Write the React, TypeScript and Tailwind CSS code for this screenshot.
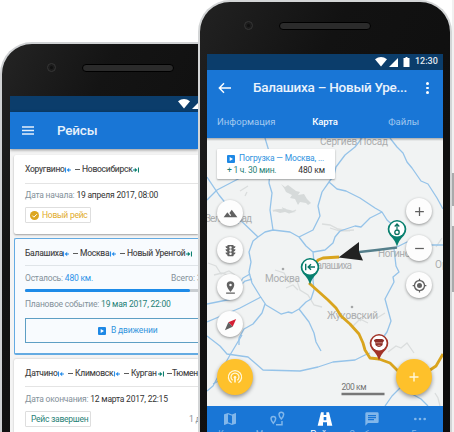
import type { ReactNode } from "react";

const ROBOTO = "font-['Roboto','Noto_Sans',sans-serif]";

function Stop({ end = false }: { end?: boolean }) {
  return (
    <svg viewBox="0 0 6 6" className={`mt-[1px] h-[6px] w-[6px] shrink-0 ${end ? "text-[#0d8070]" : "text-[#2a8fea]"}`}>
      <g transform={end ? "translate(6 0) scale(-1 1)" : undefined}>
        <path d="M.5 .4v5.200M6 3H3" stroke="currentColor" strokeWidth="1.100" fill="none" />
        <path d="M1.600 3 4.200.7v4.600z" fill="currentColor" />
      </g>
    </svg>
  );
}

function PlayBox({ className }: { className: string }) {
  return (
    <svg viewBox="0 0 8 8" className={`shrink-0 ${className}`}>
      <rect width="8" height="8" rx="1" fill="#1e88e5" />
      <path d="M2.700 2v4L6 4z" fill="#fff" />
    </svg>
  );
}

function Wifi() {
  return (
    <svg viewBox="0 0 12 10" className="h-[10px] w-[12px] shrink-0">
      <path d="M0 2.200Q6-2 12 2.200L6 9.600z" fill="#fff" />
    </svg>
  );
}

function Signal() {
  return (
    <svg viewBox="0 0 9 9" className="h-[9px] w-[9px] shrink-0">
      <path d="M9 0v9H0z" fill="#fff" />
    </svg>
  );
}

function Hardware({ className }: { className: string }) {
  return (
    <div className={`flex items-center ${className}`}>
      <div className="h-[9px] w-[9px] rounded-full border border-[#363636] bg-[#1c1c1c] p-[2px]">
        <div className="h-full w-full rounded-full bg-[#101010]" />
      </div>
      <div className="ml-[26px] h-[8px] w-[92px] rounded-full border-[1.5px] border-black bg-[#2b2b2b]" />
    </div>
  );
}

function Title({ children }: { children: ReactNode }) {
  return (
    <div className="flex h-[12px] items-center whitespace-nowrap text-[8.5px] leading-[12px] tracking-[-.25px] text-[#3c3c3c] [-webkit-text-stroke:0.1px_#3c3c3c]">
      {children}
    </div>
  );
}

function Dash() {
  return (
    <span className="flex w-[11px] shrink-0 pl-[4px]">
      <span className="h-px w-[5px] bg-[#5c5c5c]" />
    </span>
  );
}

function LeftPhone() {
  return (
    <div className="w-[198px] shrink-0 overflow-hidden pt-[42px]">
      <div className="h-[390px] rounded-tl-[32px] border-l-2 border-t-2 border-[#d0d2d4] bg-gradient-to-br from-[#242424] via-[#141414] via-30% to-[#0c0c0c] pl-[8px]">
        <Hardware className="h-[52px] pl-[37px] pb-[5px]" />
        <div className="h-[336px] overflow-hidden bg-[#f4f4f4]">
          <div className="flex h-[16px] items-center gap-[2px] bg-[#0b3d6b] pl-[168px]">
            <Wifi />
            <Signal />
          </div>
          <div className="flex h-[37px] items-center bg-[#1976d6] pl-[12px] shadow-[0_1px_3px_rgba(0,0,0,.4)]">
            <svg viewBox="0 0 12 9" className="h-[9px] w-[12px]">
              <path d="M0 1h12M0 4.500h12M0 8h12" stroke="#e6f0fb" strokeWidth="1.300" />
            </svg>
            <div className="ml-[23px] text-[13.500px] font-medium leading-none tracking-[-.2px] text-[#e6f0fb]">Рейсы</div>
          </div>

          <div className="flex flex-col gap-[4px] pl-[4px] pt-[6px]">
            <div className="h-[79px] shrink-0 rounded-l-[2px] bg-white pl-[11px] pt-[8px] shadow-[0_1px_2px_rgba(0,0,0,.35)]">
              <Title>
                <span className="w-[40px] shrink-0">Хоругвино</span><Stop />
                <Dash />
                <span className="w-[51px] shrink-0">Новосибирск</span><Stop end />
              </Title>
              <div className="mt-[8px] h-px bg-[#e4e4e4]" />
              <div className="mt-[5px] flex h-[12px] items-center gap-[2px] whitespace-nowrap text-[8.500px] tracking-[-.22px] text-[#84919a]">
                Дата начала:<span className="text-[#333]">19 апреля 2017, 08:00</span>
              </div>
              <div className="mt-[6px] flex h-[16px] w-[66px] items-center whitespace-nowrap rounded-[1px] border border-[#dedede] pl-[4px] text-[8.500px] tracking-[-.25px] text-[#dfab2c]">
                <svg viewBox="0 0 9 9" className="mr-[3px] h-[9px] w-[9px] shrink-0">
                  <circle cx="4.500" cy="4.500" r="4.500" fill="#dca61f" />
                  <path d="m2.300 4.600 1.600 1.600 3-3" stroke="#fff" fill="none" />
                </svg>
                Новый рейс
              </div>
            </div>

            <div className="h-[117px] shrink-0 rounded-l-[2px] border border-r-0 border-b-2 border-[#64abe2] bg-[#f8fbfe] pl-[10px] pt-[8px]">
              <Title>
                <span className="w-[38px] shrink-0">Балашиха</span><Stop />
                <Dash />
                <span className="w-[30px] shrink-0">Москва</span><Stop />
                <Dash />
                <span className="w-[59px] shrink-0">Новый Уренгой</span><Stop end />
              </Title>
              <div className="mt-[6px] h-px bg-[#dfe4e8]" />
              <div className="mt-[6px] flex h-[12px] items-center whitespace-nowrap text-[8.500px] tracking-[-.22px] text-[#84919a]">
                Осталось:<span className="ml-[2px] text-[#2f92e8]">480 км.</span>
                <span className="ml-auto w-[27px] tracking-[-.1px]">Всего: 3</span>
              </div>
              <div className="mt-[5px] h-[3px] bg-[#c9ced2]"><div className="h-full w-[165px] rounded-full bg-[#1e8be8]" /></div>
              <div className="mt-[6px] flex h-[12px] items-center gap-[2px] whitespace-nowrap text-[8.500px] tracking-[-.22px] text-[#84919a]">
                Плановое событие:<span className="text-[#1f7f76]">19 мая 2017, 22:00</span>
              </div>
              <div className="mt-[8px] flex h-[25px] items-center border border-r-0 border-[#5e9fc4] pl-[72px] text-[8.500px] tracking-[-.15px] text-[#3194dd]">
                <PlayBox className="mr-[5px] h-[8px] w-[8px]" />В движении
              </div>
            </div>

            <div className="h-[79px] shrink-0 rounded-l-[2px] bg-white pl-[11px] pt-[8px] shadow-[0_0_2px_rgba(0,0,0,.25)]">
              <Title>
                <span className="w-[33px] shrink-0">Датчино</span><Stop />
                <Dash />
                <span className="w-[39px] shrink-0">Климовск</span><Stop />
                <Dash />
                <span className="w-[27px] shrink-0">Курган</span><Stop end />
                <span className="flex w-[8px] shrink-0 pl-[3px]"><span className="h-px w-[5px] bg-[#5c5c5c]" /></span>
                <span>Тюмень</span>
              </Title>
              <div className="mt-[7px] h-px bg-[#e4e4e4]" />
              <div className="mt-[6px] flex h-[12px] items-center gap-[2px] whitespace-nowrap text-[8.500px] tracking-[-.22px] text-[#84919a]">
                Дата окончания:<span className="text-[#333]">12 марта 2017, 22:15</span>
              </div>
              <div className="mt-[6px] flex items-center whitespace-nowrap text-[8.500px] tracking-[-.25px]">
                <span className="flex h-[16px] w-[66px] items-center rounded-[1px] border border-[#dedede] pl-[5px] text-[#1f7f76]">Рейс завершен</span>
                <span className="ml-auto w-[9px] text-[#84919a]">1 д</span>
              </div>
            </div>
          </div>
        </div>
      </div>
    </div>
  );
}

const ROADS = [
  "M265 138 268 148 271 158 270 170 269 183 272 193 270 210 273 230",
  "M207 177 219 195 235 215 258 237",
  "M207 200 217 190 240 178 252 172",
  "M258 237 265 232 273 230 290 232 299 237",
  "M362 138 355 147 345 155 336 167 334 175 329 182 322 192 318 206 320 216 313 230 299 237",
  "M258 237 253 241 249 252 251 262 249 272 252 283 260 296 266 305 276 311 281 314 288 312 292 313 299 309 306 302 311 299 314 290 313 280 314 262 313 252 306 246 299 237",
  "M313 252 325 250 333 243 335 237 340 231 355 226 361 227 370 218 382 212",
  "M329 182 337 189 346 191 360 198 375 208 382 212 387 220 397 229",
  "M390 138 397 147 403 153 407 162 412 168 421 181 428 184 437 198 443 209",
  "M207 304 232 299 239 285 243 278 250 274",
  "M239 287 245 281 252 279",
  "M207 322 240 308 261 297",
  "M265 304 262 313 253 324 244 329 239 338 239 345",
  "M299 309 309 322 314 333 316 342 321 351",
  "M207 336 220 346 227 354 248 357 255 363 263 370 300 371 318 367 333 362 355 360 365 355 370 353",
  "M242 335 230 355 221 371 213 386 207 391",
  "M213 384 222 379",
  "M394 249 396 266 399 272 393 277 394 282 385 299 388 310 391 321 387 332 382 339",
  "M397 247 407 242 411 245 443 245",
  "M385 406 392 396 402 386",
  "M412 394 421 399 428 406",
];

function Pin({ x, y, color, children }: { x: number; y: number; color: string; children: ReactNode }) {
  return (
    <g transform={`translate(${x} ${y})`}>
      <path d="M0 17.500Q-2 11-7 6.500A9.300 9.300 0 1 1 7 6.500Q2 11 0 17.500z" fill={color} />
      <circle r="7.600" fill="#fff" />
      {children}
    </g>
  );
}

function CityMap() {
  return (
    <svg viewBox="207 138 236 268" className="block h-[268px] w-[236px]">
      <rect x="207" y="138" width="236" height="268" fill="#f1f3f3" />
      <g fill="none" stroke="#dadddd" strokeWidth="1.300">
        <path d="M208 263l8 3 5 8 8-3 6 4M214 275l8-2 8 3M275 270l9 3 6 10 6-5 4 12 8 5 6 10 8 2M286 288l7-3 5 5M273 211l12-2 4 4 7-3M322 224l8 1 8 4 12 2M330 228l10 3 14-1M345 320l9-5 7 6M352 327l8-8 8 4M377 318l8-5M388 352l8-6 5 2 6-5 7 10M435 393l3 5 2 8M436 247l6-9M240 191l8-5M245 196l2-4" />
      </g>
      <path d="M281 184l4 3 3-2 8 6 4 1-2 3 6-1 3 5 4 4-3 2-2-2-6-1-2 3-3-6-5-1 2-3-6-3-2-4zM272 210l7-1 4 1-1-3 3 2 5 1 6 2-8 1-3-1-5 1z" fill="#d6dada" />
      <g fill="none" stroke="#95c3e9" strokeWidth="1.300" strokeLinejoin="round">
        {ROADS.map((d) => <path key={d} d={d} />)}
      </g>
      <g fill="#acaeaf" className={ROBOTO} fontSize="10">
        <text x="320" y="145" textLength="68">Сергиев Посад</text>
        <text x="205" y="222" textLength="47">Зеленоград</text>
        <text x="265" y="282" textLength="35">Москва</text>
        <text x="311" y="269" textLength="41">Балашиха</text>
        <text x="378" y="257" textLength="37">Ногинск</text>
        <text x="435" y="268">Орехово</text>
        <text x="327" y="319" textLength="51">Жуковский</text>
      </g>
      <g fill="#a5a7a8">
        <circle cx="283" cy="269" r="1.300" />
        <circle cx="352" cy="307" r="1.300" />
      </g>
      <g fill="none" stroke="#d9a41d" strokeWidth="2.800" strokeLinejoin="round">
        <path d="M309 283 328 300 336 308 341 316 350 324 359 334 363 343 365 350 370 358 379 359 390 363 399 372 414 380 430 370 436 366 443 354" />
        <path d="M313 268 318 260 323 258 339 257" />
      </g>
      <path d="M355 252.500 377 250 397 247.500" stroke="#557f8b" strokeWidth="2.500" fill="none" />
      <path d="M338.500 257.500 359 242 359 251.500 363 260.500z" fill="#222" />
      <Pin x={397} y={229} color="#08806f">
        <path d="M0 .5V-4.500M-2.300-2.500 0-5 2.300-2.500" stroke="#08705f" strokeWidth="1.200" fill="none" />
        <circle cy="3.200" r="2.200" stroke="#08705f" strokeWidth="1.300" fill="none" />
      </Pin>
      <Pin x={310} y={267} color="#08806f">
        <path d="M-4.300-3.200v6.400M5 0H-1.800M1-2.700-1.800 0 1 2.700" stroke="#087565" strokeWidth="1.400" fill="none" />
      </Pin>
      <Pin x={379} y={343} color="#a23328">
        <path d="M-5.200-2.200Q-4.500-4.500-2-4H2Q4.500-4.500 5.200-2.200L3.600-.5V2Q0 6.200-3.600 2V-.5z" fill="#8b2c26" />
        <path d="M-3-.2h6M-1.500 2.300h3" stroke="#dda39a" strokeWidth=".8" />
      </Pin>
      <text x="341.500" y="389.500" fontSize="8.500" textLength="25" fill="#737373" className={ROBOTO}>200 км</text>
      <path d="M341.500 394h43" stroke="#777" strokeWidth="2.500" />
    </svg>
  );
}

function RoundButton({ children }: { children: ReactNode }) {
  return (
    <div className="flex h-[26px] w-[26px] items-center justify-center rounded-full bg-[#fdfdfd] text-[#606060] shadow-[0_1px_3px_rgba(0,0,0,.4)]">
      <svg viewBox="0 0 24 24" className="h-[15px] w-[15px]" fill="currentColor">{children}</svg>
    </div>
  );
}

function Fab({ children }: { children: ReactNode }) {
  return (
    <div className="flex h-[36px] w-[36px] items-center justify-center rounded-full bg-[#fec12b] text-[#fff8dc] shadow-[0_2px_4px_rgba(0,0,0,.4)]">
      {children}
    </div>
  );
}

function MapControls() {
  return (
    <>
      <div className="absolute left-[10px] top-[11px] h-[30px] w-[118px] whitespace-nowrap rounded-[1px] bg-white px-[10px] pt-[4px] text-[8.500px] tracking-[-.25px] shadow-[0_1px_2px_rgba(0,0,0,.35)]">
        <div className="flex h-[11px] items-center tracking-[-.17px] text-[#2f92e0]">
          <PlayBox className="mr-[4px] h-[8px] w-[8px]" />Погрузка — Москва, ...
        </div>
        <div className="mt-[1px] flex h-[11px] items-center justify-between text-[#1f7f76]">
          <span>+ 1 ч. 30 мин.</span><span className="tracking-[-.1px] text-[#333]">480 км</span>
        </div>
      </div>
      <div className="absolute left-[10px] top-[62px] flex flex-col gap-[11px]">
        <RoundButton><path d="m14 6-3.750 5 2.850 3.800-1.600 1.200C9.810 13.750 7 10 7 10l-6 8h22z" /></RoundButton>
        <RoundButton><path d="M20 10h-3V8.860A4 4 0 0 0 20 5h-3V4a1 1 0 0 0-1-1H8a1 1 0 0 0-1 1v1H4a4 4 0 0 0 3 3.860V10H4a4 4 0 0 0 3 3.860V15H4a4 4 0 0 0 3 3.860V20a1 1 0 0 0 1 1h8a1 1 0 0 0 1-1v-1.140A4 4 0 0 0 20 15h-3v-1.140A4 4 0 0 0 20 10zm-8 9a2 2 0 1 1 0-4 2 2 0 0 1 0 4zm0-5a2 2 0 1 1 0-4 2 2 0 0 1 0 4zm0-5a2 2 0 1 1 0-4 2 2 0 0 1 0 4z" /></RoundButton>
        <RoundButton><path d="M18 8a6 6 0 0 0-12 0c0 4.500 6 11 6 11s6-6.500 6-11zm-8 0a2 2 0 1 1 4 0 2 2 0 0 1-4 0zM5 20v2h14v-2z" /></RoundButton>
        <RoundButton><path d="M21 3 8.500 8.500 15.500 15.500z" fill="#d51f35" /><path d="M3 21 8.500 8.500 15.500 15.500z" /></RoundButton>
      </div>
      <div className="absolute left-[199px] top-[60px] flex flex-col gap-[11px]">
        <RoundButton><path d="M11 5h2v6h6v2h-6v6h-2v-6H5v-2h6z" /></RoundButton>
        <RoundButton><path d="M5 11h14v2H5z" /></RoundButton>
        <RoundButton><path d="M12 8a4 4 0 1 0 0 8 4 4 0 0 0 0-8zm8.940 3A9 9 0 0 0 13 3.060V1h-2v2.060A9 9 0 0 0 3.060 11H1v2h2.060A9 9 0 0 0 11 20.940V23h2v-2.060A9 9 0 0 0 20.940 13H23v-2zM12 19a7 7 0 1 1 0-14 7 7 0 0 1 0 14z" /></RoundButton>
      </div>
      <div className="absolute left-[10px] top-[221px]">
        <Fab>
          <svg viewBox="0 0 16 16" className="h-[16px] w-[16px]" fill="none" stroke="currentColor" strokeWidth="1.300">
            <path d="M4.600 13.800A6.600 6.600 0 1 1 11.400 13.800M5.700 11.300A4 4 0 1 1 10.300 11.300" />
            <circle cx="8" cy="8.300" r="1.300" fill="currentColor" stroke="none" />
            <path d="M8 8.500v5" strokeWidth="1.600" />
          </svg>
        </Fab>
      </div>
      <div className="absolute left-[189px] top-[221px]">
        <Fab>
          <svg viewBox="0 0 10 10" className="h-[10px] w-[10px]"><path d="M5 .5v9M.5 5h9" stroke="currentColor" strokeWidth="1.400" /></svg>
        </Fab>
      </div>
    </>
  );
}

function NavItem({ label, active = false, children }: { label: string; active?: boolean; children: ReactNode }) {
  return (
    <div className={`flex w-[47.5px] shrink-0 flex-col items-center whitespace-nowrap pt-[5px] ${active ? "text-white" : "text-[#82b7ea]"}`}>
      <svg viewBox="0 0 24 24" className="h-[16px] w-[16px] shrink-0" fill="currentColor">{children}</svg>
      <span className={`mt-[1px] leading-[12px] ${active ? "text-[9.500px]" : "text-[8.500px]"}`}>{label}</span>
    </div>
  );
}

function RightPhone() {
  return (
    <div className="h-[470px] w-[254px] shrink-0 rounded-t-[32px] border-x-2 border-t-2 border-[#d3d5d6] bg-gradient-to-br from-[#222] via-[#121212] via-30% to-[#0c0c0c] pl-[7px]">
      <Hardware className="h-[52px] pl-[37px] pb-[5px]" />
      <div className="h-[400px] w-[236px] overflow-hidden bg-[#1976d6]">
        <div className="flex h-[16px] items-center bg-[#0b3d6b] pl-[168px]">
          <Wifi />
          <span className="ml-[2px] flex"><Signal /></span>
          <svg viewBox="0 0 6 10" className="ml-[5px] h-[10px] w-[7px]"><path d="M2 0h2v1h2v9H0V1h2z" fill="#fff" /></svg>
          <span className="ml-[5px] text-[9px] font-medium text-[#e0e7ed]">12:30</span>
        </div>
        <div className="flex h-[36px] items-center pl-[11px] text-white">
          <svg viewBox="0 0 13 12" className="h-[12px] w-[13px]"><path d="M13 6H1.500M6 1.200 1.300 6 6 10.800" fill="none" stroke="#fff" strokeWidth="1.400" /></svg>
          <span className="ml-[22px] w-[160px] whitespace-nowrap text-[13.500px] font-medium leading-none tracking-[-.25px] text-[#e9f2fc]">Балашиха – Новый Уре...</span>
          <div className="ml-[13px] flex flex-col gap-[2px]">
            <div className="h-[2.500px] w-[2.500px] rounded-full bg-white" />
            <div className="h-[2.500px] w-[2.500px] rounded-full bg-white" />
            <div className="h-[2.500px] w-[2.500px] rounded-full bg-white" />
          </div>
        </div>
        <div className="grid h-[32px] grid-cols-3 text-center text-[9.500px] leading-[32px] text-[#a2c9f0]">
          <span>Информация</span>
          <span className="border-b-2 border-[#dbbe69] font-medium tracking-[-.1px] text-white">Карта</span>
          <span>Файлы</span>
        </div>
        <div className="relative h-[268px]">
          <CityMap />
          <div className="absolute inset-x-0 top-0 h-[3px] bg-gradient-to-b from-black/30 to-transparent" />
          <MapControls />
        </div>
        <div className="flex h-[48px] -ml-[1px]">
          <NavItem label="Карта"><path d="m20.500 3-5.500 2.100L9 3 3.400 4.900 3 5.400v15.100l.7.500L9 18.900l6 2.100 5.600-1.900.4-.5V3.500zM15 19l-6-2.100V5l6 2.100z" /></NavItem>
          <NavItem label="Маршруты">
            <path d="M6.500 18.500S3 14.500 3 11.800a3.500 3.500 0 0 1 7 0c0 2.700-3.500 6.700-3.500 6.700zM18.500 12S15 8 15 5.300a3.500 3.500 0 0 1 7 0C22 8 18.500 12 18.500 12zM10.500 20.500H19.500V15" fill="none" stroke="currentColor" strokeWidth="2.200" />
          </NavItem>
          <NavItem label="Рейсы" active><path d="M6 2h4v4h4V2h4l5 20h-8v-5H9v5H1zM10 9v5h4V9z" fillRule="evenodd" /></NavItem>
          <NavItem label="Сообщения"><path d="M20 2H4a2 2 0 0 0-2 2v18l4-4h14a2 2 0 0 0 2-2V4a2 2 0 0 0-2-2zM6 6h12v2H6zm0 3h12v2H6zm0 3h9v2H6z" fillRule="evenodd" /></NavItem>
          <NavItem label="Еще"><circle cx="5" cy="12" r="2" /><circle cx="12" cy="12" r="2" /><circle cx="19" cy="12" r="2" /></NavItem>
        </div>
      </div>
    </div>
  );
}

export default function App() {
  return (
    <div className={`flex h-[432px] w-[454px] overflow-hidden bg-white ${ROBOTO}`}>
      <LeftPhone />
      <RightPhone />
      <div className="flex w-[2px] flex-col gap-[20px] bg-[#f1f1f1] pt-[173px]">
        <div className="h-[33px] bg-[#a9abac]" />
        <div className="h-[66px] bg-[#a9abac]" />
      </div>
    </div>
  );
}
